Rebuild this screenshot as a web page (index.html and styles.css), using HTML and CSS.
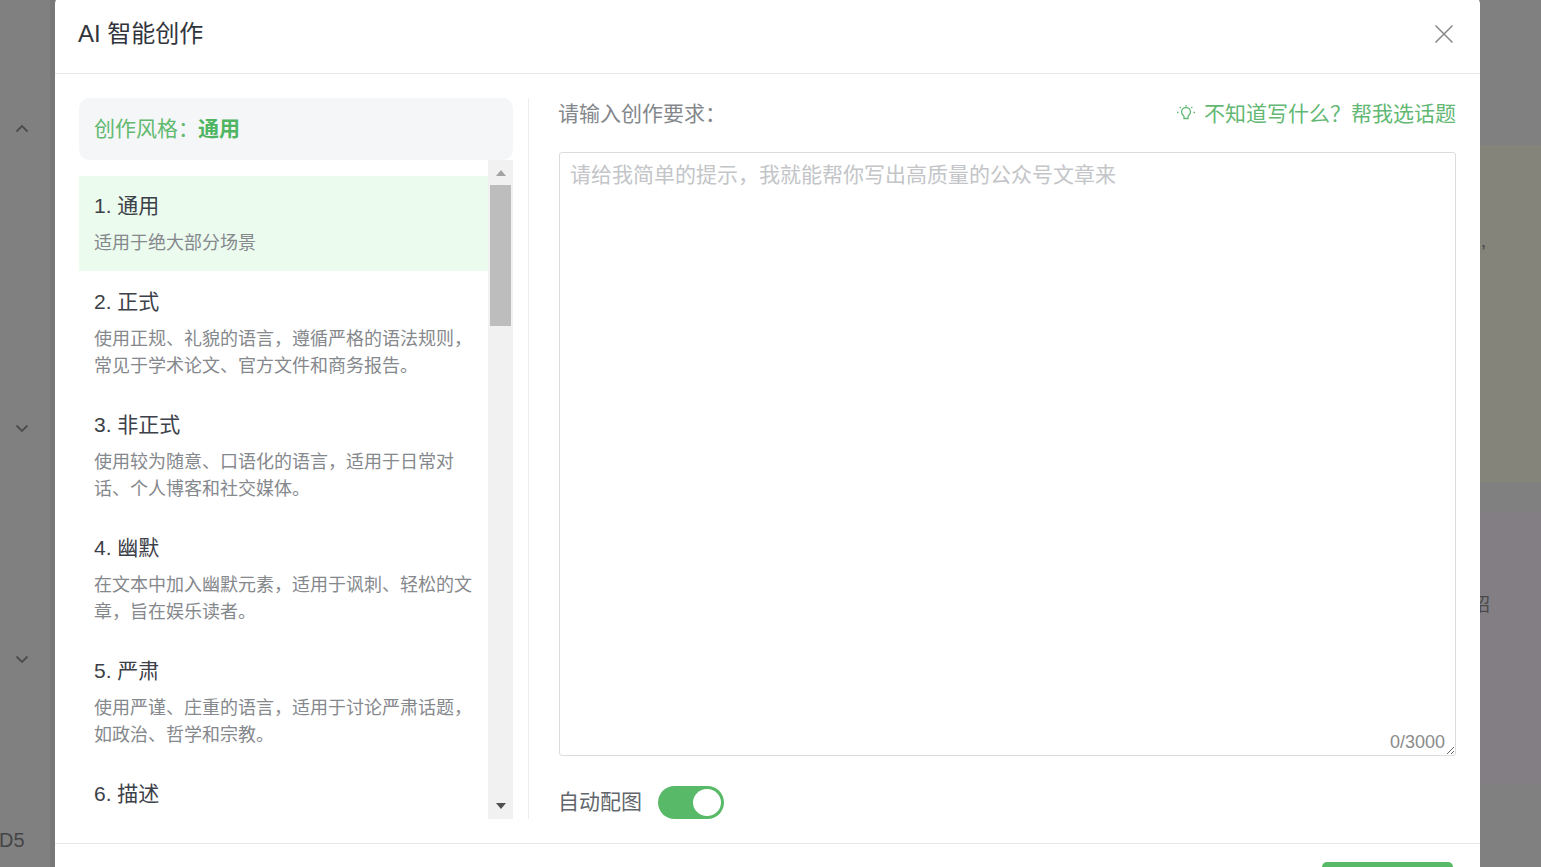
FILE: index.html
```html
<!DOCTYPE html>
<html lang="zh">
<head>
<meta charset="utf-8">
<title>AI 智能创作</title>
<link rel="stylesheet" href="styles.css">
</head>
<body>
<div class="page">
  <aside class="rail">
    <svg class="chev up" width="14" height="9" viewBox="0 0 14 9"><path d="M1.5 7.5L7 2l5.5 5.5"/></svg>
    <svg class="chev down-a" width="14" height="9" viewBox="0 0 14 9"><path d="M1.5 1.5L7 7l5.5-5.5"/></svg>
    <svg class="chev down-b" width="14" height="9" viewBox="0 0 14 9"><path d="M1.5 1.5L7 7l5.5-5.5"/></svg>
    <span class="rail-text">D5</span>
  </aside>
  <aside class="side">
    <div class="panel panel-yellow"><span class="panel-mark">,</span></div>
    <div class="panel panel-purple"><span class="panel-mark panel-glyph">招</span></div>
  </aside>

  <section class="modal">
    <header class="modal-head">
      <h1 class="modal-title">AI 智能创作</h1>
      <svg class="close" width="20" height="20" viewBox="0 0 20 20"><path d="M1.500 1.500l17 17M18.500 1.500l-17 17"/></svg>
    </header>
    <div class="modal-body">
      <div class="styles">
        <div class="styles-head"><span class="styles-text">创作风格&#xFF1A;<b class="styles-current">通用</b></span></div>
        <div class="styles-scroll">
          <ul class="style-list">
            <li class="style-item is-active"><div class="style-name">1. 通用</div><p class="style-desc">适用于绝大部分场景</p></li>
            <li class="style-item"><div class="style-name">2. 正式</div><p class="style-desc">使用正规、礼貌的语言&#xFF0C;遵循严格的语法规则&#xFF0C;常见于学术论文、官方文件和商务报告。</p></li>
            <li class="style-item"><div class="style-name">3. 非正式</div><p class="style-desc">使用较为随意、口语化的语言&#xFF0C;适用于日常对话、个人博客和社交媒体。</p></li>
            <li class="style-item"><div class="style-name">4. 幽默</div><p class="style-desc">在文本中加入幽默元素&#xFF0C;适用于讽刺、轻松的文章&#xFF0C;旨在娱乐读者。</p></li>
            <li class="style-item"><div class="style-name">5. 严肃</div><p class="style-desc">使用严谨、庄重的语言&#xFF0C;适用于讨论严肃话题&#xFF0C;如政治、哲学和宗教。</p></li>
            <li class="style-item"><div class="style-name">6. 描述</div></li>
          </ul>
          <div class="scrollbar">
            <span class="arrow arrow-up"></span>
            <span class="thumb"></span>
            <span class="arrow arrow-down"></span>
          </div>
        </div>
      </div>
      <div class="editor">
        <div class="editor-head">
          <span class="editor-label">请输入创作要求&#xFF1A;</span>
          <a class="hint">
            <svg class="bulb" width="20" height="20" viewBox="0 0 20 20"><path d="M8 14.500v-2c0-1-2.500-2-2.500-4.500a4.500 4.500 0 0 1 9 0c0 2.500-2.500 3.500-2.500 4.500v2zM10 1v1.500M1 8.500h1.500M17.500 8.500H19M3.700 3l1 1M16.300 3l-1 1"/></svg>
            不知道写什么&#xFF1F;帮我选话题
          </a>
        </div>
        <div class="input-box">
          <textarea class="input" placeholder="请给我简单的提示&#xFF0C;我就能帮你写出高质量的公众号文章来"></textarea>
          <span class="counter">0/3000</span>
        </div>
        <div class="auto-row">
          <span class="auto-label">自动配图</span>
          <span class="toggle"><span class="knob"></span></span>
        </div>
      </div>
    </div>
    <footer class="modal-foot"><button class="submit" type="button"></button></footer>
  </section>
</div>
</body>
</html>
```
FILE: styles.css
```css
* { box-sizing: border-box; }
html, body { margin: 0; height: 100%; overflow: hidden; }
body {
  font-family: "Liberation Sans", "Noto Sans CJK SC", sans-serif;
  background: #808080;
}
.page {
  position: relative;
  display: flex;
  justify-content: space-between;
  width: 1541px;
  height: 867px;
  overflow: hidden;
}
.rail {
  position: relative;
  width: 55px;
  height: 100%;
  overflow: hidden;
  border-right: 5px solid #787878;
  display: flex;
  flex-direction: column;
  align-items: flex-start;
  padding: 124px 0 0 15px;
}
.chev { flex: none; }
.chev path { fill: none; stroke: #4c4c4c; stroke-width: 1.8; }
.down-a { margin-top: 291px; }
.down-b { margin-top: 222px; }
.rail-text {
  margin: 164px 0 0 -16px;
  font-size: 20px;
  line-height: 24px;
  color: #454545;
}
.side {
  width: 61px;
  height: 100%;
  padding-top: 145px;
  display: flex;
  flex-direction: column;
  gap: 30px;
}
.panel { position: relative; overflow: hidden; }
.panel-yellow { height: 338px; background: #84847b; }
.panel-purple { height: 272px; background: #827e84; }
.panel-mark {
  display: block;
  padding: 84px 0 0 1px;
  font-size: 18px;
  line-height: 24px;
  color: #444;
}
.panel-glyph { padding: 80px 0 0 0; margin-left: -8px; color: #4a4a4a; }

.modal {
  position: absolute;
  left: 55px;
  top: -4px;
  width: 1425px;
  height: 920px;
  background: #fff;
  border-radius: 8px;
  overflow: hidden;
}
.modal-head {
  height: 78px;
  padding: 0 26px 2px 23px;
  border-bottom: 1px solid #e6e6e6;
  display: flex;
  align-items: center;
  justify-content: space-between;
}
.modal-title {
  margin: 0;
  font-size: 24px;
  font-weight: 400;
  line-height: 32px;
  color: #31343b;
}
.close path { fill: none; stroke: #8a8a8a; stroke-width: 1.6; }
.modal-body {
  height: 770px;
  padding: 24px;
  display: flex;
  border-bottom: 1px solid #e6e6e6;
}
.styles {
  width: 450px;
  padding-right: 15px;
  border-right: 1px solid #eeeeee;
  display: flex;
  flex-direction: column;
}
.styles-head {
  height: 62px;
  padding: 0 0 4px 15px;
  display: flex;
  align-items: center;
  font-size: 21px;
  color: #62ba70;
  background: #f5f6f8;
  border-radius: 10px;
}
.styles-current { margin-left: -1px; color: #4fb562; }
.styles-scroll {
  flex: 1;
  min-height: 0;
  display: flex;
  overflow: hidden;
}
.style-list {
  flex: 1;
  margin: 0;
  padding: 16px 0 0;
  list-style: none;
}
.style-item { padding: 15px 15px 14px; margin-bottom: 1px; }
.is-active { background: #ebfbee; }
.style-name {
  font-size: 21px;
  line-height: 30px;
  color: #3c4048;
}
.style-desc {
  margin: 9px 0 0;
  font-size: 18px;
  line-height: 27px;
  color: #85888c;
}
.scrollbar {
  width: 25px;
  height: 100%;
  padding: 0 2px;
  background: #f1f1f1;
  display: flex;
  flex-direction: column;
  align-items: center;
}
.thumb { width: 21px; height: 141px; background: #bdbdbd; }
.arrow { width: 0; height: 0; border-left: 5.500px solid transparent; border-right: 5.500px solid transparent; }
.arrow-up { margin: 10px 0 9px; border-bottom: 6px solid #a3a3a3; }
.arrow-down { margin-top: auto; margin-bottom: 10px; border-top: 6px solid #505050; }

.editor {
  flex: 1;
  min-width: 0;
  padding-left: 30px;
  display: flex;
  flex-direction: column;
}
.editor-head {
  height: 54px;
  padding-bottom: 26px;
  display: flex;
  align-items: center;
  justify-content: space-between;
}
.editor-label { margin-left: -1px; font-size: 21px; color: #84878b; }
.hint {
  display: flex;
  align-items: center;
  gap: 8px;
  font-size: 21px;
  color: #62b873;
}
.bulb { margin-top: 3px; }
.bulb path { fill: none; stroke: #62b873; stroke-width: 1.3; }
.input-box {
  position: relative;
  height: 604px;
  flex: none;
}
.input {
  display: block;
  width: 100%;
  height: 100%;
  padding: 7px 10px;
  border: 1px solid #dcdcdc;
  border-radius: 3px;
  outline: none;
  font: 21px/30px "Liberation Sans", "Noto Sans CJK SC", sans-serif;
  color: #333;
  resize: both;
}
.input::placeholder { color: #c3c5c8; opacity: 1; }
.counter {
  position: absolute;
  right: 11px;
  bottom: 3px;
  font-size: 18px;
  line-height: 22px;
  color: #8b8b8b;
}
.auto-row {
  margin-top: 29px;
  display: flex;
  align-items: center;
  gap: 16px;
}
.auto-label { margin-left: -1px; padding-bottom: 5px; font-size: 21px; color: #62666c; }
.toggle {
  width: 66px;
  height: 33px;
  padding: 3px;
  border-radius: 17px;
  background: #58b968;
  display: flex;
  justify-content: flex-end;
}
.knob { width: 28px; height: 27px; border-radius: 50%; background: #fff; }
.modal-foot {
  padding: 18px 27px 0 0;
  display: flex;
  justify-content: flex-end;
}
.submit {
  width: 131px;
  height: 46px;
  border: 0;
  border-radius: 5px;
  background: #58b968;
}
```
